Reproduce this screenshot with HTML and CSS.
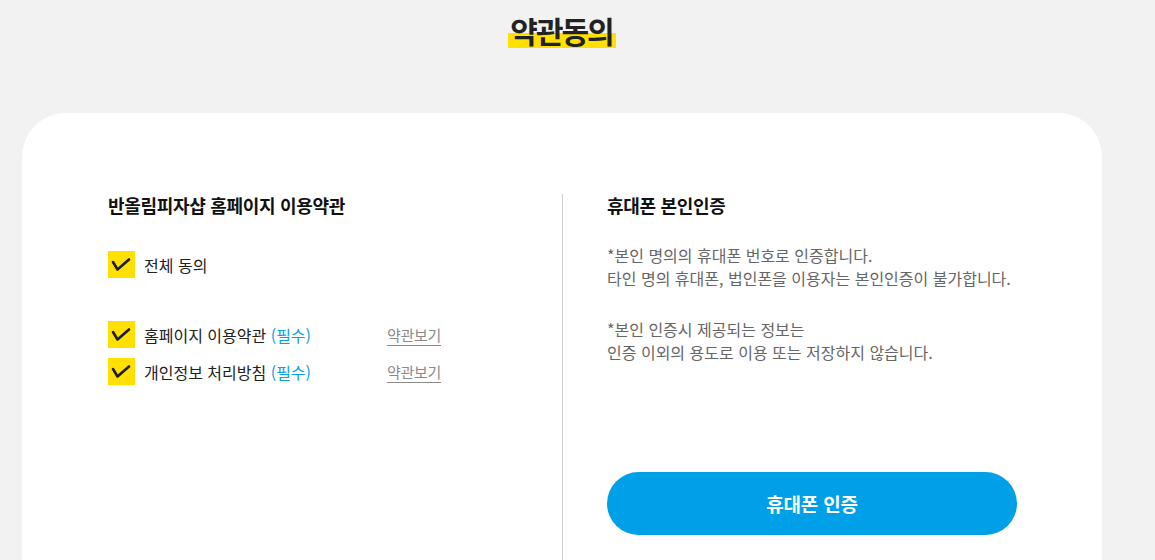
FILE: index.html
```html
<!DOCTYPE html>
<html lang="ko">
<head>
  <meta charset="utf-8">
  <title>약관동의</title>
  <link rel="stylesheet" href="styles.css">
</head>
<body>
  <div class="wrap">
    <h1 class="pageTitle"><span class="mark">약관동의</span></h1>

    <div class="card">
      <div class="col colLeft">
        <h2 class="colTitle">반올림피자샵 홈페이지 이용약관</h2>

        <label class="checkRow checkAll">
          <span class="checkBox">
            <svg width="27" height="27" viewBox="0 0 27 27"><polyline points="5,11 9.5,18.5 21,8.5" fill="none" stroke="#1e1e1e" stroke-width="2.6" stroke-linecap="round" stroke-linejoin="round"/></svg>
          </span>
          <span class="checkText">전체 동의</span>
        </label>

        <div class="termList">
          <div class="termItem">
            <label class="checkRow">
              <span class="checkBox">
                <svg width="27" height="27" viewBox="0 0 27 27"><polyline points="5,11 9.5,18.5 21,8.5" fill="none" stroke="#1e1e1e" stroke-width="2.6" stroke-linecap="round" stroke-linejoin="round"/></svg>
              </span>
              <span class="checkText">홈페이지 이용약관 <em class="required">(필수)</em></span>
            </label>
            <a class="viewLink" href="#">약관보기</a>
          </div>
          <div class="termItem">
            <label class="checkRow">
              <span class="checkBox">
                <svg width="27" height="27" viewBox="0 0 27 27"><polyline points="5,11 9.5,18.5 21,8.5" fill="none" stroke="#1e1e1e" stroke-width="2.6" stroke-linecap="round" stroke-linejoin="round"/></svg>
              </span>
              <span class="checkText">개인정보 처리방침 <em class="required">(필수)</em></span>
            </label>
            <a class="viewLink" href="#">약관보기</a>
          </div>
        </div>
      </div>

      <div class="col colRight">
        <h2 class="colTitle">휴대폰 본인인증</h2>
        <p class="notice">*본인 명의의 휴대폰 번호로 인증합니다.<br>타인 명의 휴대폰, 법인폰을 이용자는 본인인증이 불가합니다.</p>
        <p class="notice">*본인 인증시 제공되는 정보는<br>인증 이외의 용도로 이용 또는 저장하지 않습니다.</p>
        <button class="authButton" type="button">휴대폰 인증</button>
      </div>
    </div>
  </div>
</body>
</html>
```

FILE: styles.css
```css
body {
  margin: 0;
  background-color: #f2f2f2;
  font-family: "Noto Sans CJK KR", "Noto Sans", sans-serif;
  color: #222;
}
.wrap {
  width: 1124px;
}
.pageTitle {
  margin: 0;
  padding-top: 8px;
  text-align: center;
  font-size: 30px;
  font-weight: 700;
  line-height: 44px;
  letter-spacing: -2px;
}
.pageTitle .mark {
  padding: 0 3px 0 2px;
  background: linear-gradient(transparent 56%, #ffe000 56%, #ffe000 91%, transparent 91%);
}
.card {
  display: flex;
  margin: 61px 22px 0;
  padding: 81px 0 0;
  min-height: 400px;
  background-color: #fff;
  border-radius: 44px 44px 0 0;
}
.col {
  box-sizing: border-box;
}
.colLeft {
  width: 541px;
  padding-left: 86px;
  border-right: 1px solid #cfcfcf;
}
.colRight {
  flex: 1;
  padding-left: 44px;
  padding-right: 85px;
}
.colTitle {
  margin: 0;
  font-size: 18px;
  font-weight: 700;
  line-height: 22px;
  letter-spacing: -0.3px;
  color: #111;
}
.checkRow {
  display: flex;
  align-items: center;
}
.checkBox {
  display: block;
  width: 27px;
  height: 27px;
  background-color: #ffe000;
}
.checkBox svg {
  display: block;
}
.checkText {
  margin-left: 9px;
  font-size: 16px;
  line-height: 22px;
}
.checkAll {
  margin-top: 35px;
}
.termList {
  margin-top: 43px;
  display: flex;
  flex-direction: column;
  gap: 10px;
  width: 333px;
}
.termItem {
  display: flex;
  align-items: center;
  justify-content: space-between;
}
.required {
  font-style: normal;
  color: #0b9de6;
}
.viewLink {
  font-size: 15px;
  line-height: 20px;
  letter-spacing: -0.3px;
  color: #8a8a8a;
  text-decoration: underline;
  text-underline-offset: 4px;
}
.notice {
  margin: 0;
  font-size: 16px;
  line-height: 23px;
  color: #666;
}
.colTitle + .notice {
  margin-top: 28px;
}
.notice + .notice {
  margin-top: 28px;
}
.authButton {
  display: block;
  margin-top: 108px;
  width: 410px;
  height: 63px;
  border: 0;
  border-radius: 32px;
  background-color: #00a0e9;
  color: #fff;
  font-family: "Noto Sans CJK KR", "Noto Sans", sans-serif;
  font-size: 19px;
  font-weight: 700;
  letter-spacing: -0.2px;
}
```
